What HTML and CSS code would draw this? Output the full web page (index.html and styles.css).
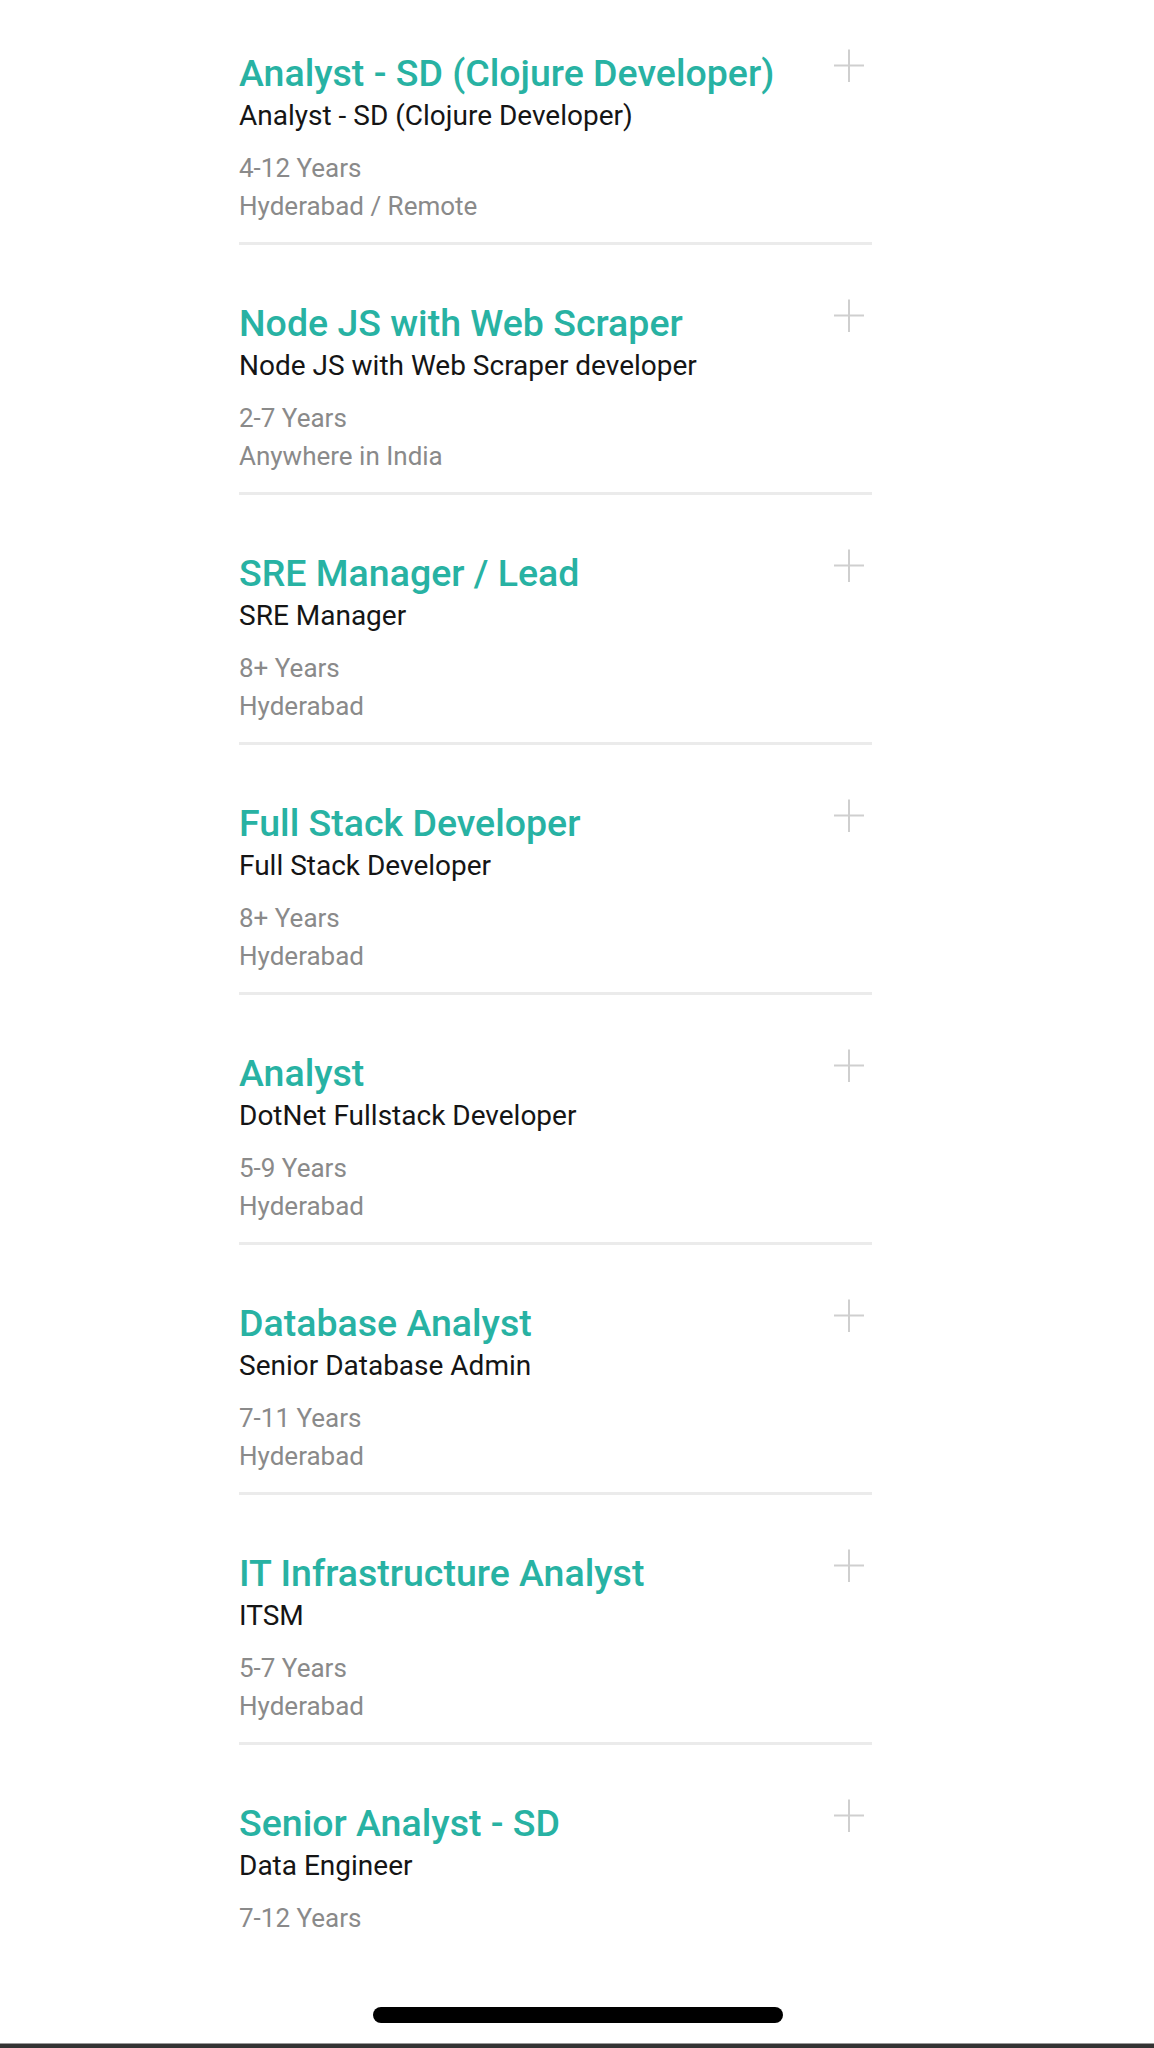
FILE: index.html
```html
<!DOCTYPE html>
<html lang="en">
  <head>
    <meta charset="UTF-8" />
    <title>Openings</title>
    <link rel="stylesheet" href="styles.css">
  </head>
  <body>
    <div class="jobs">
      <div class="job">
        <div class="job-info">
          <h2 class="job-title">Analyst - SD (Clojure Developer)</h2>
          <p class="job-role">Analyst - SD (Clojure Developer)</p>
          <p class="job-meta">4-12 Years</p>
          <p class="job-meta">Hyderabad / Remote</p>
        </div>
        <svg class="plus" viewBox="0 0 32 32"><path d="M16 0V33M1 16H31" /></svg>
      </div>

      <div class="job">
        <div class="job-info">
          <h2 class="job-title">Node JS with Web Scraper</h2>
          <p class="job-role">Node JS with Web Scraper developer</p>
          <p class="job-meta">2-7 Years</p>
          <p class="job-meta">Anywhere in India</p>
        </div>
        <svg class="plus" viewBox="0 0 32 32"><path d="M16 0V33M1 16H31" /></svg>
      </div>

      <div class="job">
        <div class="job-info">
          <h2 class="job-title">SRE Manager / Lead</h2>
          <p class="job-role">SRE Manager</p>
          <p class="job-meta">8+ Years</p>
          <p class="job-meta">Hyderabad</p>
        </div>
        <svg class="plus" viewBox="0 0 32 32"><path d="M16 0V33M1 16H31" /></svg>
      </div>

      <div class="job">
        <div class="job-info">
          <h2 class="job-title">Full Stack Developer</h2>
          <p class="job-role">Full Stack Developer</p>
          <p class="job-meta">8+ Years</p>
          <p class="job-meta">Hyderabad</p>
        </div>
        <svg class="plus" viewBox="0 0 32 32"><path d="M16 0V33M1 16H31" /></svg>
      </div>

      <div class="job">
        <div class="job-info">
          <h2 class="job-title">Analyst</h2>
          <p class="job-role">DotNet Fullstack Developer</p>
          <p class="job-meta">5-9 Years</p>
          <p class="job-meta">Hyderabad</p>
        </div>
        <svg class="plus" viewBox="0 0 32 32"><path d="M16 0V33M1 16H31" /></svg>
      </div>

      <div class="job">
        <div class="job-info">
          <h2 class="job-title">Database Analyst</h2>
          <p class="job-role">Senior Database Admin</p>
          <p class="job-meta">7-11 Years</p>
          <p class="job-meta">Hyderabad</p>
        </div>
        <svg class="plus" viewBox="0 0 32 32"><path d="M16 0V33M1 16H31" /></svg>
      </div>

      <div class="job">
        <div class="job-info">
          <h2 class="job-title">IT Infrastructure Analyst</h2>
          <p class="job-role">ITSM</p>
          <p class="job-meta">5-7 Years</p>
          <p class="job-meta">Hyderabad</p>
        </div>
        <svg class="plus" viewBox="0 0 32 32"><path d="M16 0V33M1 16H31" /></svg>
      </div>

      <div class="job">
        <div class="job-info">
          <h2 class="job-title">Senior Analyst - SD</h2>
          <p class="job-role">Data Engineer</p>
          <p class="job-meta">7-12 Years</p>
        </div>
        <svg class="plus" viewBox="0 0 32 32"><path d="M16 0V33M1 16H31" /></svg>
      </div>
    </div>

    <div class="home-bar"></div>
    <div class="bottom-edge"></div>
  </body>
</html>
```

FILE: styles.css
```css
body {
  margin: 0;
  font-family: Roboto, "Noto Sans", sans-serif;
  background-color: #fff;
  overflow: hidden;
}
p,
h2 {
  margin: 0;
}
.jobs {
  width: 633px;
  margin-left: 239px;
  padding-top: 51px;
}
.job {
  display: flex;
  justify-content: space-between;
  align-items: flex-start;
  padding-bottom: 17px;
  border-bottom: 3px solid #ebebeb;
}
.job + .job {
  padding-top: 56px;
}
.job:last-child {
  border-bottom: none;
}
.job-title {
  font-size: 37.5px;
  font-weight: 500;
  line-height: 44px;
  color: #28b2a3;
}
.job-role {
  font-size: 28px;
  line-height: 42px;
  color: #151515;
  margin-bottom: 12px;
}
.job-meta {
  font-size: 26px;
  line-height: 38px;
  color: #8a8a8a;
}
.plus {
  width: 32px;
  height: 33px;
  margin-top: -2px;
  margin-right: 7px;
  flex-shrink: 0;
  fill: none;
  stroke: #cfcfcf;
  stroke-width: 2;
}
.home-bar {
  position: fixed;
  left: 373px;
  bottom: 25px;
  width: 410px;
  height: 16px;
  border-radius: 8px;
  background-color: #000;
}
.bottom-edge {
  position: fixed;
  left: 0;
  right: 0;
  bottom: 0;
  height: 4px;
  background-color: #333;
  border-top: 1px solid #9a9a9a;
}
```
